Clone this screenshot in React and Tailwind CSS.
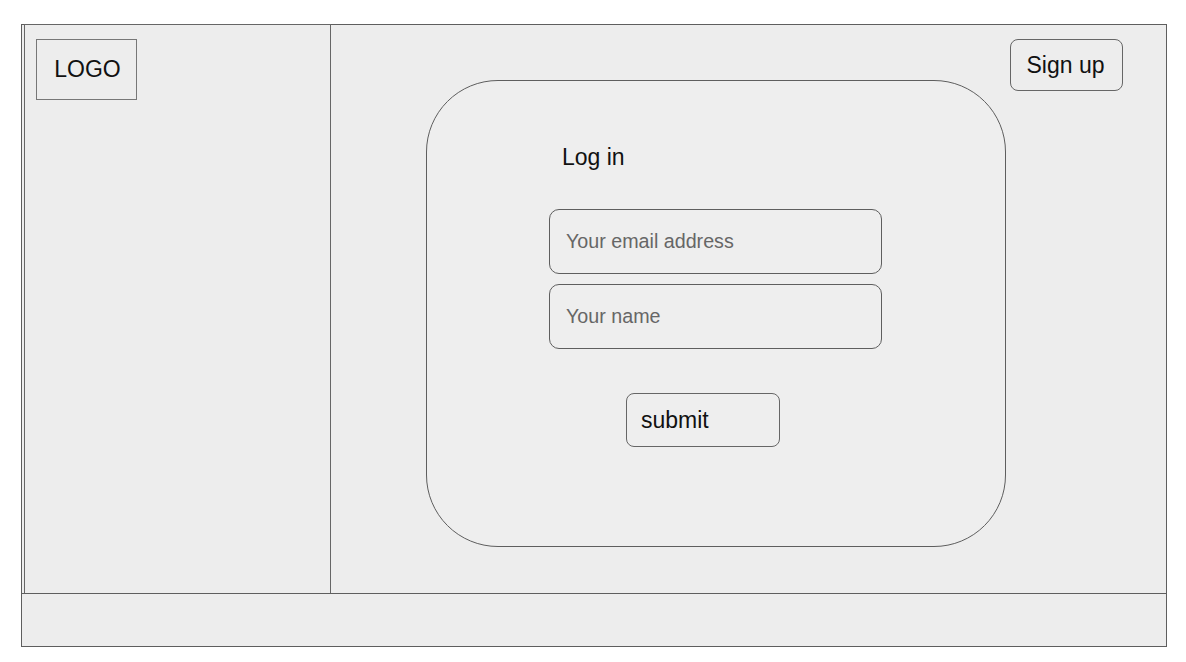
import React from 'react';

const font = { fontFamily: '"Liberation Sans", Arial, sans-serif' };

function LoginCard() {
  return (
    <div className="mt-[55px] ml-[95px] flex h-[467px] w-[580px] shrink-0 flex-col rounded-[72px] border border-[#5e5e5e] bg-[#eeeeee]">
      <h1 className="ml-[135px] mt-[65px] text-[23px] leading-none text-[#111]">Log in</h1>
      <div className="ml-[122px] mt-[40px] flex flex-col gap-[10px]">
        <input
          type="email"
          placeholder="Your email address"
          className="h-[65px] w-[333px] rounded-[10px] border border-[#5e5e5e] bg-transparent px-[16px] text-[19.7px] outline-none placeholder:text-[#666]"
        />
        <input
          type="text"
          placeholder="Your name"
          className="h-[65px] w-[333px] rounded-[10px] border border-[#5e5e5e] bg-transparent px-[16px] text-[19.7px] outline-none placeholder:text-[#666]"
        />
      </div>
      <button
        type="button"
        className="ml-[199px] mt-[44px] flex h-[54px] w-[154px] items-center rounded-[8px] border border-[#666] pl-[14px] text-[23px] text-[#111]"
      >
        submit
      </button>
    </div>
  );
}

export default function App() {
  return (
    <div className="min-h-screen bg-white pt-[24px]" style={font}>
      <div className="ml-[21px] flex h-[623px] w-[1146px] flex-col border border-[#5e5e5e] bg-[#ededed]">
        <div className="flex h-[568px]">
          <aside className="ml-[2px] -mt-px h-[569px] w-[307px] shrink-0 border-x border-t border-[#666]">
            <div className="ml-[11px] mt-[14px] flex h-[61px] w-[101px] items-center justify-center border border-[#777] pl-[2px] text-[23px] text-[#111]">
              LOGO
            </div>
          </aside>
          <main className="flex flex-1 items-start">
            <LoginCard />
            <button
              type="button"
              className="ml-auto mr-[43px] mt-[14px] flex h-[52px] w-[113px] items-center justify-center rounded-[8px] border border-[#666] pr-[2px] text-[23px] text-[#111]"
            >
              Sign up
            </button>
          </main>
        </div>
        <footer className="h-[53px] border-t border-[#5e5e5e]" />
      </div>
    </div>
  );
}
